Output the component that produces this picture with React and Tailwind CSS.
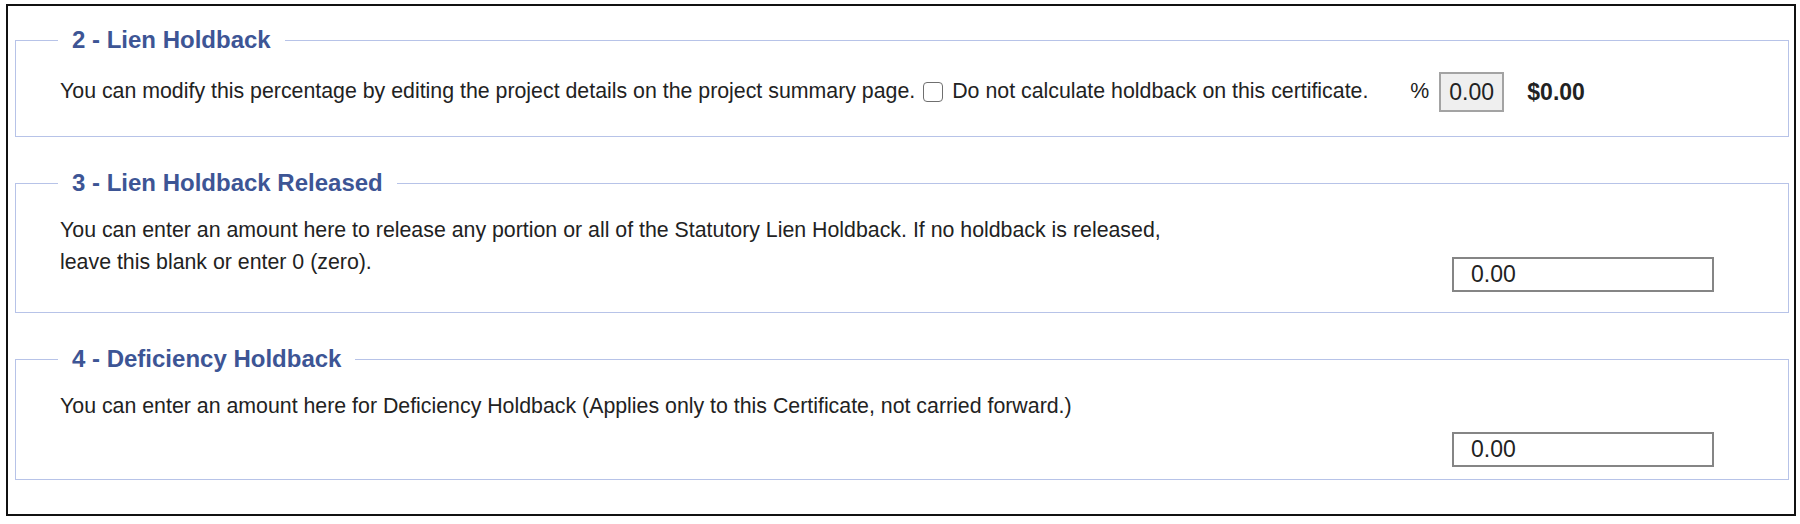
import React from "react";

const inputCls =
  "w-[262px] h-[35px] border-2 border-[#858585] bg-white pl-[17px] text-[23px] text-[#222] outline-none font-['Liberation_Sans',Arial,sans-serif]";

function Section({ title, className, children }) {
  return (
    <fieldset className={"border border-[#b7c3e8] pl-[44px] pr-[74px] " + className}>
      <legend className="-ml-[2px] px-[14px] text-[24px] leading-[28px] font-bold text-[#3d5595]">
        {title}
      </legend>
      {children}
    </fieldset>
  );
}

export default function App() {
  return (
    <div className="w-[1800px] h-[524px] bg-white pl-[6px] pt-[4px] font-['Liberation_Sans',Arial,sans-serif] text-[21.33px] text-[#222]">
      <div className="w-[1790px] h-[512px] border-2 border-[#111] pl-[7px] pr-[5px] pt-[20px] flex flex-col gap-[32px]">
        <Section title="2 - Lien Holdback" className="pt-[18px] pb-[24px]">
          <div className="flex items-center h-[40px]">
            <span>
              You can modify this percentage by editing the project details on the project summary page.
            </span>
            <input
              type="checkbox"
              className="appearance-none ml-[8px] w-[20px] h-[20px] border-[1.5px] border-[#6f6f6f] rounded-[4px] bg-white"
            />
            <span className="ml-[9px]">Do not calculate holdback on this certificate.</span>
            <span className="ml-[42px]">%</span>
            <input
              readOnly
              value="0.00"
              className="ml-[10px] w-[65px] h-[40px] border-2 border-[#a3a3a3] bg-[#efefef] pl-[8px] text-[23px] text-[#222] outline-none font-['Liberation_Sans',Arial,sans-serif]"
            />
            <span className="ml-[23px] text-[23px] font-bold">$0.00</span>
          </div>
        </Section>

        <Section title="3 - Lien Holdback Released" className="pt-[17px] pb-[20px]">
          <div className="flex items-end justify-between">
            <p className="w-[1130px] leading-[32px] mb-[14px]">
              You can enter an amount here to release any portion or all of the Statutory Lien Holdback. If no holdback is released, leave this blank or enter 0 (zero).
            </p>
            <input readOnly value="0.00" className={inputCls} />
          </div>
        </Section>

        <Section title="4 - Deficiency Holdback" className="pt-[17px] pb-[12px]">
          <p className="leading-[32px]">
            You can enter an amount here for Deficiency Holdback (Applies only to this Certificate, not carried forward.)
          </p>
          <div className="flex justify-end mt-[10px]">
            <input readOnly value="0.00" className={inputCls} />
          </div>
        </Section>
      </div>
    </div>
  );
}
